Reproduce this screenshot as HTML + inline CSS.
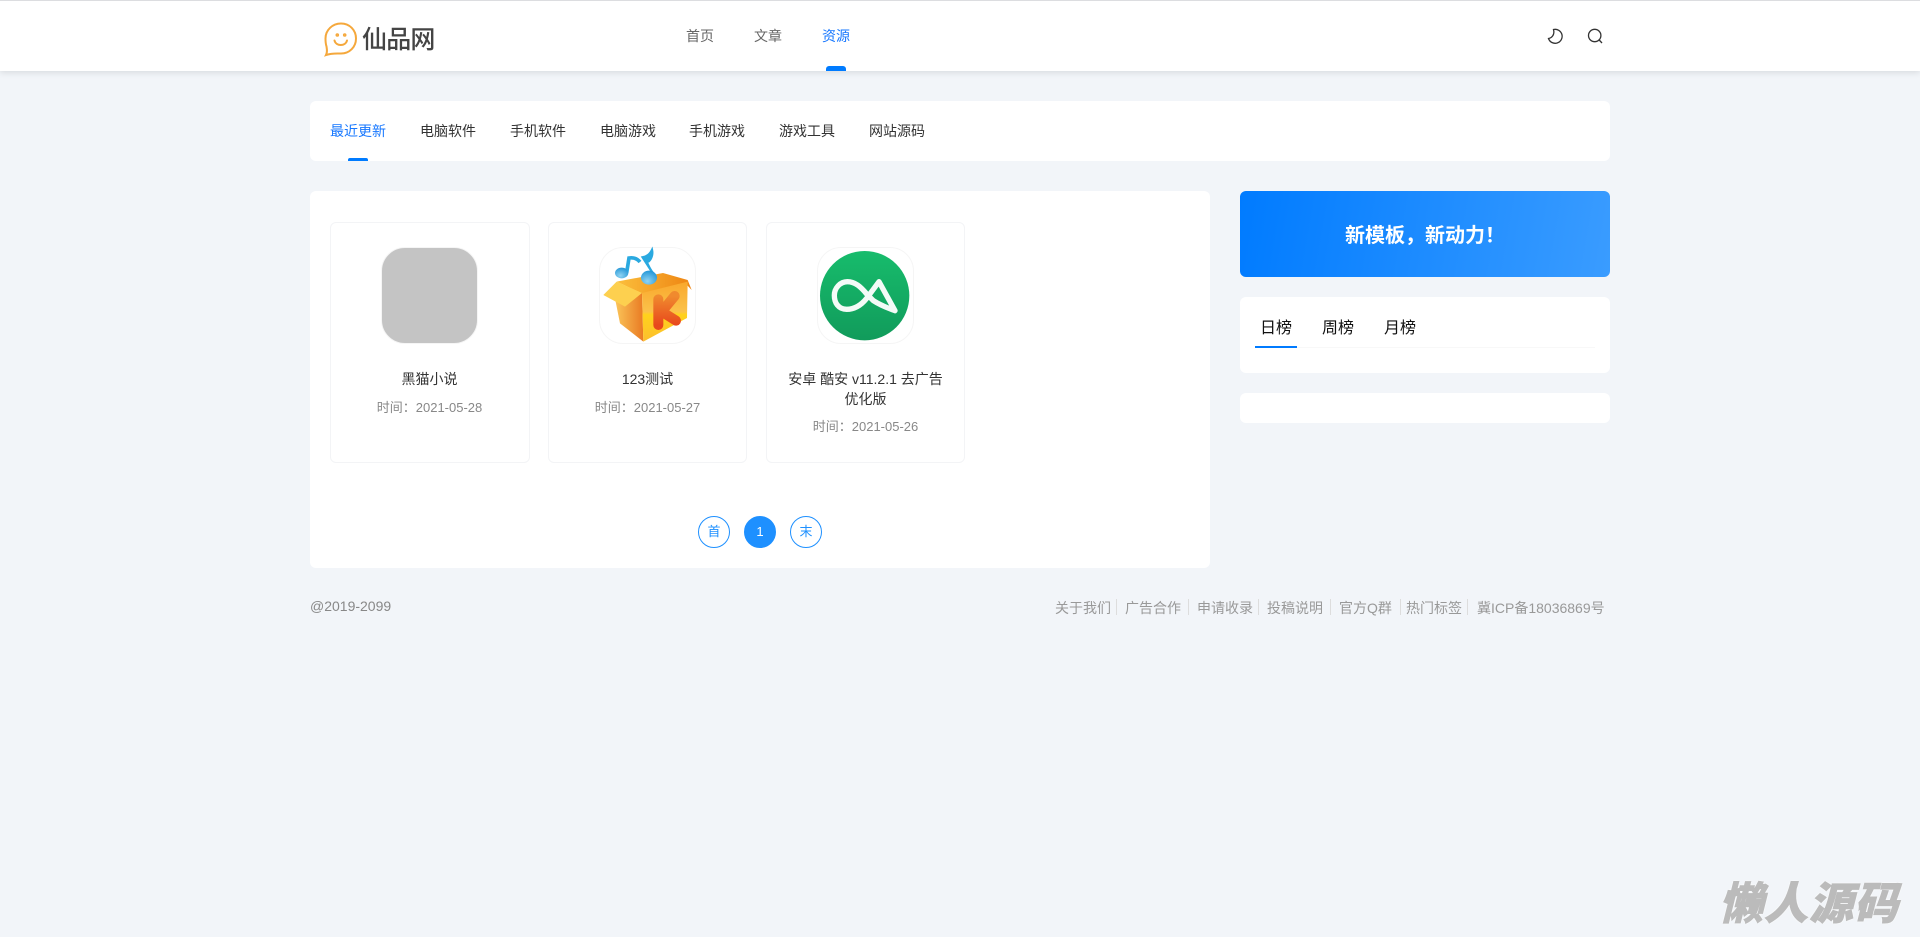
<!DOCTYPE html>
<html lang="zh"><head><meta charset="utf-8"><title>仙品网</title>
<style>
*{box-sizing:border-box;margin:0;padding:0}
html,body{width:1920px;height:937px;overflow:hidden;background:#f2f5f9;font-family:"Liberation Sans","Noto Sans CJK SC",sans-serif;color:#333}
.a{position:absolute}
.t{position:absolute;white-space:nowrap;font-size:14px;line-height:20px}
.c{text-align:center}
.panel{position:absolute;background:#fff;border-radius:6px}
.card{position:absolute;top:222px;width:199px;height:241px;border:1px solid #f3f4f6;border-radius:6px;background:#fff}
.ico{position:absolute;top:247px;width:97px;height:97px;border:1px solid #f5f5f5;border-radius:24px;overflow:hidden;background:#fff}
.pg{position:absolute;top:516px;width:32px;height:32px;border:1px solid #1e90ff;border-radius:50%;color:#1e90ff;font-size:13px;line-height:30px;text-align:center}
.sep{position:absolute;top:599px;width:1px;height:16px;background:#ddd}
</style></head><body>
<div class="a" style="left:0;top:0;width:1920px;height:71px;background:#fff;border-top:1px solid #dcdde0;box-shadow:0 2px 6px rgba(0,0,0,.1)"></div>
<svg class="a" style="left:322px;top:20px" width="40" height="38" viewBox="322 20 40 38" fill="none" stroke="#f5a83c" stroke-width="2" stroke-linecap="round"><path d="M326 55C327.500 52 327 49.500 326.500 46.500C325.500 43.500 325.500 41 325.500 38.500C325.500 30 332.500 23.500 341 23.500C349.500 23.500 356 30 356 38.500C356 47 349.500 53.500 341 53.500C336 53.500 332 53 326 55Z"/><path d="M334.500 40.500C336 46.500 345.500 46.500 347 40.500"/><circle cx="337.300" cy="35" r=".8"/><circle cx="344.700" cy="35" r=".8"/></svg>
<div class="t" style="left:362px;top:24px;font-size:25px;line-height:32px;font-weight:500;color:#444;letter-spacing:-.8px">仙品网</div>
<div class="t" style="left:686px;top:26px;color:#666">首页</div>
<div class="t" style="left:754px;top:26px;color:#666">文章</div>
<div class="t" style="left:822px;top:26px;color:#1677ff">资源</div>
<div class="a" style="left:826px;top:66px;width:20px;height:5px;background:#007bff;border-radius:3px 3px 0 0"></div>
<svg class="a" style="left:1540px;top:20px" width="70" height="30" viewBox="1540 20 70 30" fill="none" stroke="#333" stroke-width="1.300"><path d="M1553.500 29.500A7 7 0 1 1 1548.500 38.500C1551.500 38 1555 35 1553.500 29.500Z"/><circle cx="1594.700" cy="35.500" r="6.200"/><path d="M1599.200 40L1602 43"/></svg>

<div class="panel" style="left:310px;top:101px;width:1300px;height:60px"></div>
<div class="t" style="left:330px;top:121px;color:#1677ff">最近更新</div>
<div class="t" style="left:420px;top:121px">电脑软件</div>
<div class="t" style="left:510px;top:121px">手机软件</div>
<div class="t" style="left:600px;top:121px">电脑游戏</div>
<div class="t" style="left:689px;top:121px">手机游戏</div>
<div class="t" style="left:779px;top:121px">游戏工具</div>
<div class="t" style="left:869px;top:121px">网站源码</div>
<div class="a" style="left:348px;top:158px;width:20px;height:3px;background:#007bff;border-radius:2px 2px 0 0"></div>

<div class="panel" style="left:310px;top:191px;width:900px;height:377px"></div>
<div class="card" style="left:330px;width:200px"></div>
<div class="card" style="left:548px"></div>
<div class="card" style="left:766px"></div>

<div class="ico" style="left:381px;background:#c4c4c4"></div>
<div class="t c" style="left:330px;width:199px;top:369px">黑猫小说</div>
<div class="t c" style="left:330px;width:199px;top:398px;font-size:13px;color:#888">时间：2021-05-28</div>

<div class="ico" style="left:599px"></div>
<svg class="a" style="left:590px;top:240px" width="120" height="120" viewBox="0 0 360 360">
<defs>
<linearGradient id="l" x1="0" y1="0" x2="1" y2="0"><stop offset="0" stop-color="#fbc65a"/><stop offset="1" stop-color="#e97a22"/></linearGradient>
<linearGradient id="r" x1="0" y1="0" x2="0" y2="1"><stop offset="0" stop-color="#f9a72c"/><stop offset=".5" stop-color="#fbc24a"/><stop offset=".55" stop-color="#ffd21c"/><stop offset="1" stop-color="#fcbf2e"/></linearGradient>
<linearGradient id="k" x1="0" y1="0" x2="0" y2="1"><stop offset="0" stop-color="#f08a2e"/><stop offset="1" stop-color="#e8481c"/></linearGradient>
<linearGradient id="i" x1="0" y1="0" x2="1" y2="0"><stop offset="0" stop-color="#fbbf3c"/><stop offset="1" stop-color="#ee8412"/></linearGradient>
<radialGradient id="b" cx=".4" cy=".75" r=".8"><stop offset="0" stop-color="#8fd3f2"/><stop offset="1" stop-color="#1f94d6"/></radialGradient>
</defs>
<path d="M80 125L219 99L293 120L305 150L292 136L156 160Z" fill="url(#i)"/>
<path d="M75 175L156 159L160 305L90 250Z" fill="url(#l)"/>
<path d="M156 159L293 125L291 234L160 305Z" fill="url(#r)"/>
<path d="M40 165L80 125L156 159L105 200Z" fill="#fdd04f"/>
<path d="M205 178V255M254 168L215 215L258 242" fill="none" stroke="url(#k)" stroke-width="30" stroke-linecap="round" stroke-linejoin="round"/>
<path d="M110 98L117 54C130 52 142 56 150 66" fill="none" stroke="#2aa9e0" stroke-width="11"/>
<ellipse cx="95" cy="99" rx="20" ry="16" fill="url(#b)"/>
<path d="M194 108L158 52C170 50 180 42 186 30C189 44 184 58 174 66" fill="#2aa9e0" stroke="#2aa9e0" stroke-width="7"/>
<ellipse cx="177" cy="113" rx="24" ry="21" fill="url(#b)"/>
</svg>
<div class="t c" style="left:548px;width:199px;top:369px">123测试</div>
<div class="t c" style="left:548px;width:199px;top:398px;font-size:13px;color:#888">时间：2021-05-27</div>

<div class="ico" style="left:817px"></div>
<svg class="a" style="left:730px;top:190px" width="300" height="290" viewBox="0 0 900 870">
<defs><linearGradient id="g" x1="0" y1="0" x2="0" y2="1"><stop offset="0" stop-color="#17bc6c"/><stop offset="1" stop-color="#119b5b"/></linearGradient></defs>
<circle cx="404" cy="317" r="134" fill="url(#g)"/>
<path d="M495 362L447 275L410 325C390 350 370 358 350 358C325 358 313 338 313 316C313 295 330 275 352 275C375 275 392 290 410 312L430 332C450 345 475 355 495 362" fill="none" stroke="#f4fbf7" stroke-width="16" stroke-linecap="round" stroke-linejoin="round"/>
</svg>
<div class="t c" style="left:766px;width:199px;top:369px">安卓 酷安 v11.2.1 去广告</div>
<div class="t c" style="left:766px;width:199px;top:389px">优化版</div>
<div class="t c" style="left:766px;width:199px;top:417px;font-size:13px;color:#888">时间：2021-05-26</div>

<div class="pg" style="left:698px">首</div>
<div class="pg" style="left:744px;background:#1e90ff;color:#fff">1</div>
<div class="pg" style="left:790px">末</div>

<div class="a" style="left:1240px;top:191px;width:370px;height:86px;border-radius:6px;background:linear-gradient(100deg,#007bff,#3a9cff)"></div>
<div class="t c" style="left:1240px;width:370px;top:222px;font-size:20px;line-height:28px;font-weight:700;color:#fff">新模板，新动力！</div>

<div class="panel" style="left:1240px;top:297px;width:370px;height:76px"></div>
<div class="a" style="left:1255px;top:347px;width:340px;height:1px;background:#f8f8f8"></div>
<div class="a" style="left:1255px;top:346px;width:42px;height:2px;background:#007bff"></div>
<div class="t" style="left:1260px;top:317px;font-size:16px;line-height:24px;color:#111">日榜</div>
<div class="t" style="left:1322px;top:317px;font-size:16px;line-height:24px;color:#111">周榜</div>
<div class="t" style="left:1384px;top:317px;font-size:16px;line-height:24px;color:#111">月榜</div>

<div class="panel" style="left:1240px;top:393px;width:370px;height:30px"></div>

<div class="t" style="left:310px;top:596px;color:#888">@2019-2099</div>
<div class="t" style="left:1055px;top:598px;color:#999">关于我们</div><div class="sep" style="left:1116px"></div>
<div class="t" style="left:1125px;top:598px;color:#999">广告合作</div><div class="sep" style="left:1188px"></div>
<div class="t" style="left:1197px;top:598px;color:#999">申请收录</div><div class="sep" style="left:1258px"></div>
<div class="t" style="left:1267px;top:598px;color:#999">投稿说明</div><div class="sep" style="left:1330px"></div>
<div class="t" style="left:1339px;top:598px;color:#999">官方Q群</div><div class="sep" style="left:1400px"></div>
<div class="t" style="left:1406px;top:598px;color:#999">热门标签</div><div class="sep" style="left:1467px"></div>
<div class="t" style="left:1477px;top:598px;color:#999">冀ICP备18036869号</div>

<div class="t" style="left:1719px;top:869px;font-size:44px;line-height:62px;font-weight:900;font-style:italic;color:#bbb;-webkit-text-stroke:.8px #bbb;text-shadow:0 0 2px #fff,0 0 2px #fff;letter-spacing:1px;font-family:'Noto Sans CJK SC',sans-serif">懒人源码</div>
</body></html>
